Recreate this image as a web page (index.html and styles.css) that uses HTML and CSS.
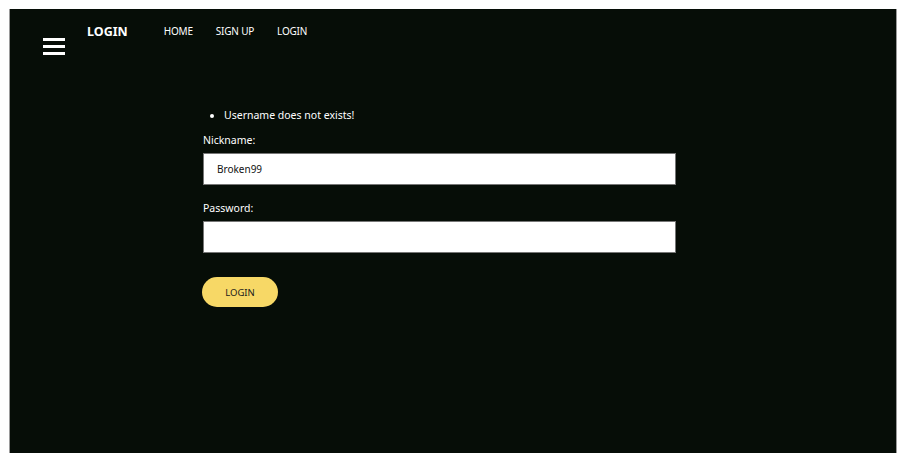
FILE: index.html
```html
<!DOCTYPE html>
<html lang="en">
<head>
<meta charset="utf-8">
<title>Login</title>
<link rel="stylesheet" href="styles.css">
</head>
<body>
<div class="frame">
  <header class="header">
    <div class="burger"><span></span><span></span><span></span></div>
    <div class="brand">LOGIN</div>
    <nav class="nav">
      <a href="#">HOME</a>
      <a href="#">SIGN UP</a>
      <a href="#">LOGIN</a>
    </nav>
  </header>
  <main class="main">
    <ul class="errors">
      <li>Username does not exists!</li>
    </ul>
    <form class="form">
      <label class="label">Nickname:</label>
      <input class="input" type="text" value="Broken99">
      <label class="label label-gap">Password:</label>
      <input class="input" type="password" value="">
      <button class="btn" type="button">LOGIN</button>
    </form>
  </main>
</div>
</body>
</html>
```

FILE: styles.css
```css
html, body {
  margin: 0;
  padding: 0;
  background: #ffffff;
}
body {
  font-family: "Noto Sans", "Open Sans", sans-serif;
}
.frame {
  margin: 9px;
  width: 888px;
  height: 444px;
  box-sizing: border-box;
  background: #060d07;
  border-left: 1px solid #9a9a9a;
  border-right: 1px solid #9a9a9a;
  color: #ffffff;
}
.header {
  display: flex;
  align-items: flex-start;
  padding-top: 14px;
}
.burger {
  margin-left: 33px;
  margin-top: 15px;
  width: 22px;
  display: flex;
  flex-direction: column;
  gap: 4px;
}
.burger span {
  display: block;
  height: 3px;
  background: #ffffff;
}
.brand {
  margin-left: 22px;
  font-weight: 700;
  font-size: 12.5px;
}
.nav {
  display: flex;
  gap: 23px;
  margin-left: 36px;
  padding-top: 1px;
}
.nav a {
  color: #ffffff;
  text-decoration: none;
  font-size: 10px;
  letter-spacing: -0.2px;
}
.main {
  padding-left: 193px;
  padding-top: 53px;
}
.errors {
  margin: 0;
  padding-left: 21px;
  font-size: 10.5px;
  line-height: 14px;
}
.form {
  display: flex;
  flex-direction: column;
  align-items: flex-start;
  width: 473px;
}
.label {
  font-size: 10.5px;
  margin-top: 11px;
  margin-bottom: 6px;
}
.label-gap {
  margin-top: 16px;
}
.input {
  width: 473px;
  height: 32px;
  box-sizing: border-box;
  border: 1px solid #767676;
  background: #ffffff;
  padding: 0 13px;
  font-family: inherit;
  font-size: 10px;
  color: #111111;
  outline: none;
}
.btn {
  margin-top: 24px;
  margin-left: -1px;
  width: 76px;
  height: 30px;
  border: none;
  border-radius: 15px;
  background: #f7d866;
  color: #1a1a1a;
  font-family: inherit;
  font-size: 9.5px;
}
```
